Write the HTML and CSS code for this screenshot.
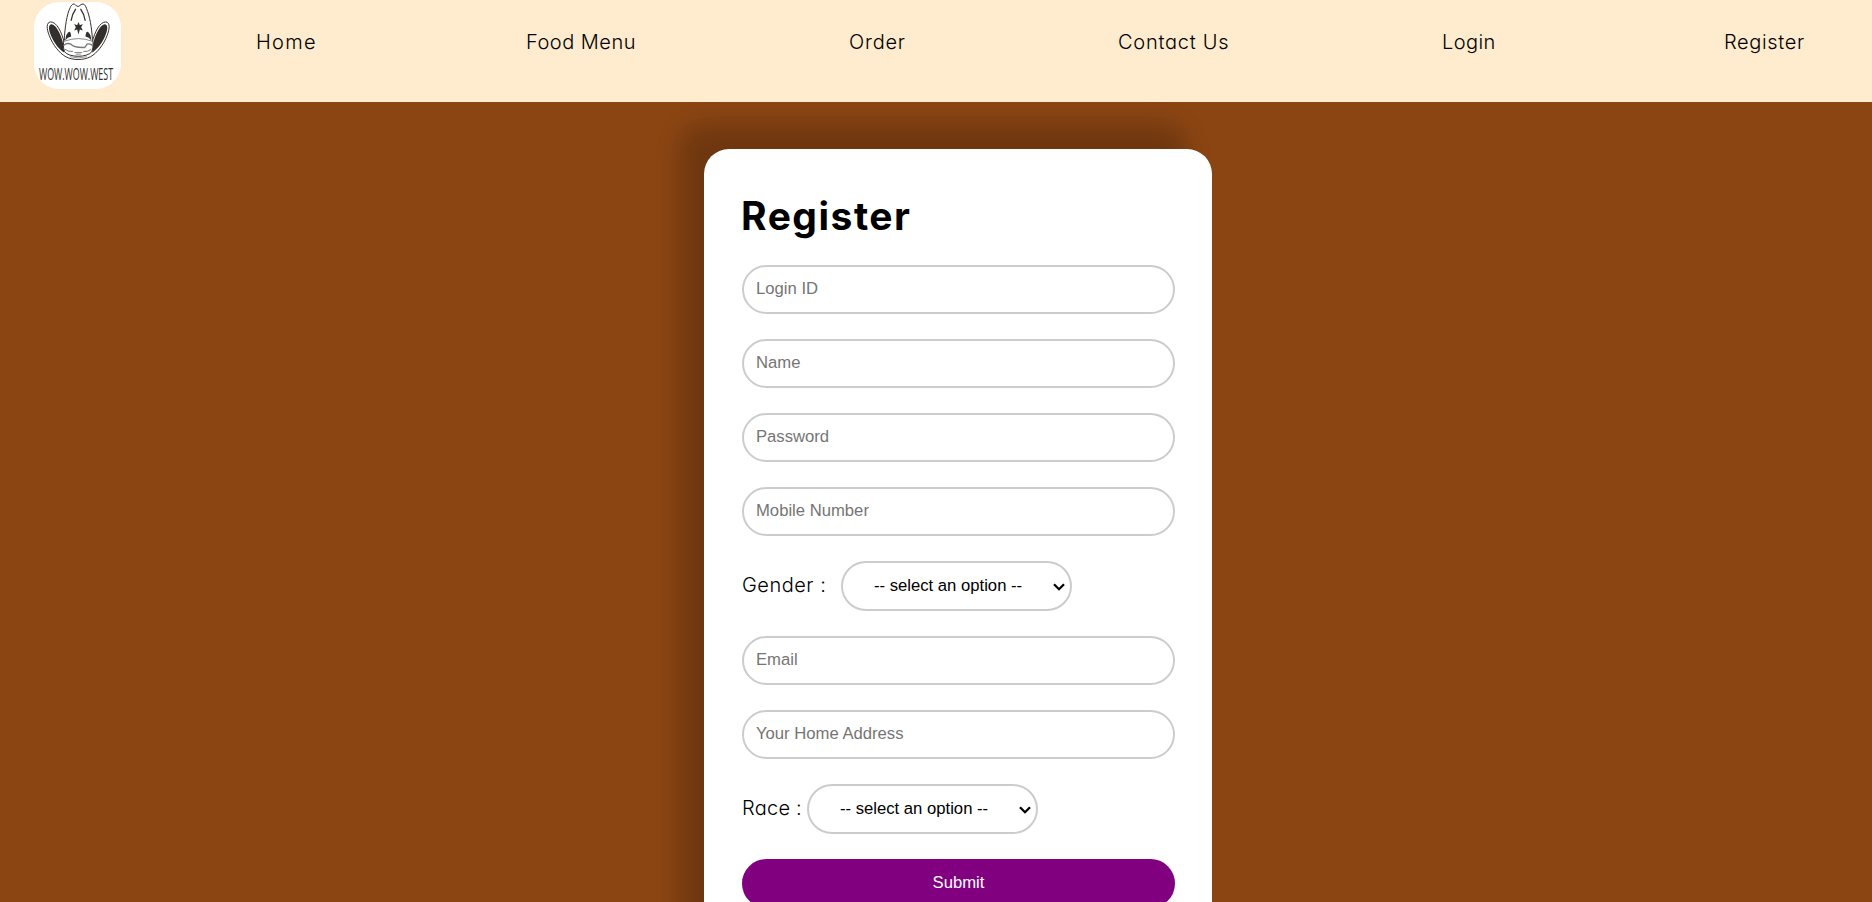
FILE: index.html
```html
<!DOCTYPE html>
<html lang="en">
<head>
<meta charset="utf-8">
<title>Register</title>
<link rel="stylesheet" href="styles.css">
</head>
<body>
<header class="topbar">
  <svg class="logo" viewBox="42 6 262 262" role="img" aria-label="WOW.WOW.WEST">
    <g fill="#fff" stroke="#332f2c" stroke-width="3" stroke-linejoin="round" stroke-linecap="round">
      <path d="M133 128C125 95 110 66 92 66C78 67 80 88 88 107C98 134 118 160 138 171C160 182 190 182 212 171C232 160 252 134 262 107C270 88 272 67 258 66C240 66 225 95 217 128Z"/>
      <path d="M130 132C122 98 106 72 94 73C84 75 86 92 94 109C103 130 117 148 133 158Z" fill="#332f2c" stroke="none"/>
      <path d="M220 132C228 98 244 72 256 73C266 75 264 92 256 109C247 130 233 148 217 158Z" fill="#332f2c" stroke="none"/>
      <path d="M133 119C135 83 141 42 151 23C156 11 163 9 169 17Q175 23 181 16C189 9 196 12 200 25C210 49 216 84 218 119C222 132 220 146 216 156C202 174 148 174 134 156C130 145 129 130 133 119Z"/>
      <path d="M139 106Q152 84 154 110Q143 112 136 122ZM212 106Q199 84 197 110Q208 112 215 122Z" fill="#332f2c" stroke="none"/>
      <path d="M154 61Q157 42 167 28M196 61Q193 42 183 28" fill="none" stroke-width="4"/>
      <path d="M134 124Q175 108 217 124" fill="none" stroke="#888"/>
      <path d="M132 136Q141 128 153 133Q160 144 195 143L202 133Q212 130 219 138" fill="none" stroke="#777" stroke-width="4"/>
      <path d="M136 149Q146 157 158 155M214 149Q204 157 192 155" fill="none" stroke="#777"/>
      <path d="M152 171Q175 178 200 171" fill="none" stroke="#999"/>
      <path d="M165 158H186M169 163H182" stroke="#888"/>
      <path d="M176 66L180 76L189 72L184 82L189 92L180 89L176 104L172 89L163 92L168 82L163 72L172 76Z" fill="#332f2c" stroke="none"/>
    </g>
    <text class="logo-text" x="57" y="240" textLength="223" lengthAdjust="spacingAndGlyphs">WOW.WOW.WEST</text>
  </svg>
  <nav class="nav">
    <a class="link home">Home</a>
    <a class="link menu">Food Menu</a>
    <a class="link order">Order</a>
    <a class="link contact">Contact Us</a>
    <a class="link login">Login</a>
    <a class="link register">Register</a>
  </nav>
</header>
<main class="card">
  <h1 class="title">Register</h1>
  <form class="form">
    <input class="field" type="text" placeholder="Login ID">
    <input class="field" type="text" placeholder="Name">
    <input class="field" type="password" placeholder="Password">
    <input class="field" type="text" placeholder="Mobile Number">
    <div class="row">
      <label class="label gender">Gender :</label>
      <div class="select"><span>-- select an option --</span><svg class="arrow" viewBox="0 0 12 8"><path d="M1 1.3L6 6.2L11 1.3"/></svg></div>
    </div>
    <input class="field" type="text" placeholder="Email">
    <input class="field" type="text" placeholder="Your Home Address">
    <div class="row">
      <label class="label race">Race :</label>
      <div class="select"><span>-- select an option --</span><svg class="arrow" viewBox="0 0 12 8"><path d="M1 1.3L6 6.2L11 1.3"/></svg></div>
    </div>
    <button class="submit" type="button">Submit</button>
  </form>
</main>
</body>
</html>
```
FILE: styles.css
```css
* { box-sizing: border-box; }
html { overflow: hidden; }
body {
  margin: 0;
  height: 902px;
  overflow: hidden;
  background: #8b4513;
  color: #000;
  font-family: Inter, sans-serif;
}
.topbar {
  display: flex;
  height: 102px;
  padding: 2px 0 0 34px;
  background: #ffebcd;
}
.logo {
  flex: none;
  width: 87px;
  height: 87px;
  border-radius: 25px;
  background: #fff;
}
.logo-text {
  font: 500 48px "Open Sans", sans-serif;
  fill: #332f2c;
}
.nav {
  display: flex;
  padding: 25px 0 0 135px;
}
.link, .label {
  font-size: 20px;
  line-height: 30px;
  font-weight: 350;
  white-space: nowrap;
  font-feature-settings: "cv11";
}
.home { width: 270px; letter-spacing: 1.3px; }
.menu { width: 323px; letter-spacing: .5px; }
.order { width: 269px; letter-spacing: .8px; }
.contact { width: 324px; letter-spacing: .75px; }
.login { width: 282px; letter-spacing: .4px; }
.register { letter-spacing: .65px; }
.card {
  width: 508px;
  height: 820px;
  margin: 47px 0 0 704px;
  padding: 37px 37px 0 38px;
  border-radius: 25px;
  background: #fff;
  box-shadow: -25px -25px 25px rgba(0, 0, 0, .2);
}
.title {
  margin: 0 0 19px -1px;
  font-size: 39px;
  line-height: 60px;
  font-weight: 700;
  letter-spacing: 1.5px;
}
.form {
  display: flex;
  flex-direction: column;
  gap: 25px;
}
.field {
  width: 433px;
  height: 49px;
  padding: 0 12px 1px;
  border: 2px solid #ccc;
  border-radius: 25px;
  background: #fff;
  font: 16.67px "Liberation Sans", sans-serif;
}
.field::placeholder { color: #757575; }
.row {
  display: flex;
  height: 50px;
}
.label { padding-top: 9px; }
.gender { width: 99px; letter-spacing: .5px; }
.race { width: 65px; letter-spacing: .25px; }
.select {
  display: flex;
  align-items: center;
  justify-content: space-between;
  width: 231px;
  height: 50px;
  padding: 0 5px 0 31px;
  border: 2px solid #ccc;
  border-radius: 25px;
  font: 16.67px "Liberation Sans", sans-serif;
}
.arrow {
  width: 12px;
  height: 8px;
  margin-top: 2px;
  fill: none;
  stroke: #000;
  stroke-width: 2.3;
}
.submit {
  height: 49px;
  padding: 0 0 1px;
  border: 0;
  border-radius: 25px;
  background: #800080;
  color: #fff;
  font: 16.67px "Liberation Sans", sans-serif;
}
```
